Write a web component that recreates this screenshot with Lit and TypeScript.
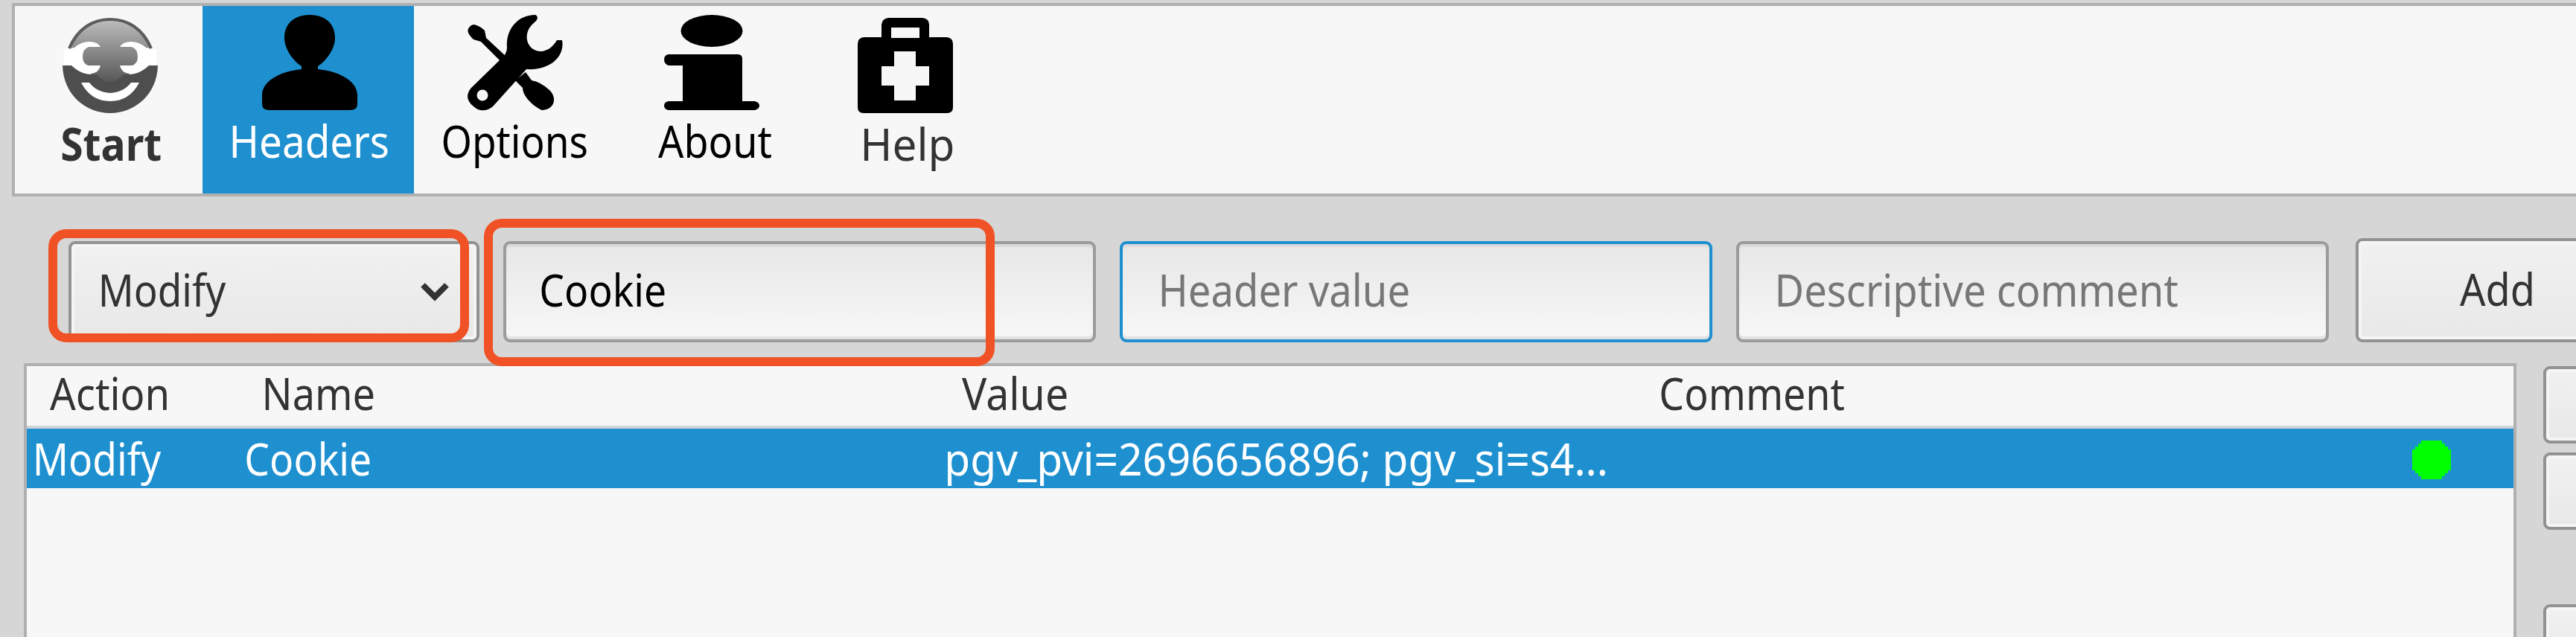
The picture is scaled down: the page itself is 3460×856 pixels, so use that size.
import { LitElement, html, css, svg } from "lit";
import { customElement, property } from "lit/decorators.js";

/* A single line of text squeezed to a fixed ink width. */
@customElement("fit-text")
class FitText extends LitElement {
  @property({ type: Number }) ink = 100;
  @property() text = "";
  @property({ type: Number }) weight = 400;
  static styles = css`
    :host { display: block; height: 84px; flex: none; }
    span { display: block; width: max-content; white-space: pre; line-height: 84px; transform-origin: 0 0; }
    .bold { font-weight: 700; }
  `;
  render() {
    return html`<span class=${this.weight > 500 ? "bold" : ""}>${this.text}</span>`;
  }
  updated() {
    const span = this.renderRoot.querySelector("span") as HTMLElement;
    const ctx = document.createElement("canvas").getContext("2d")!;
    ctx.font = `${this.weight} 61px "Noto Sans"`;
    const m = ctx.measureText(this.text);
    const k = this.ink / (m.actualBoundingBoxLeft + m.actualBoundingBoxRight);
    this.style.width = `${this.ink}px`;
    span.style.transform = `translateX(${m.actualBoundingBoxLeft * k}px) scaleX(${k})`;
  }
}

const startIcon = svg`
  <defs>
    <linearGradient id="face" x1="0" y1="0" x2="0" y2="1">
      <stop offset="0" stop-color="#bdbdbd"/><stop offset="1" stop-color="#505050"/>
    </linearGradient>
  </defs>
  <path d="M2 42L14 41Q24 30 36 30T54 40V65Q46 76 34 76T12 63L2 63ZM126 42L114 41Q104 30 92 30T74 40V65Q82 76 94 76T116 63L126 63Z" fill="#fff"/>
  <path d="M8 41C19 15 40 2 64 2S109 15 120 41L112 40Q103 32 92 32T77 39H93Q101 42 101 52T93 64H77Q79 74 90 75L84 92H44L38 75Q49 74 51 64H35Q27 62 27 52T35 39H51Q47 32 36 32T16 40Z" fill="url(#face)"/>
  <path d="M9 41C20 15 40 2 64 2S108 15 119 41" fill="none" stroke="#5c5c5c" stroke-width="4"/>
  <path d="M0 64H12C22 74 34 77 46 76Q54 86 64 86T82 76C94 77 106 74 116 64H128C127 103 97 128 64 128S1 103 0 64Z" fill="#4e4e4e"/>
  <path d="M25 87H36Q46 100 64 101Q82 100 92 87H103Q90 112 64 112T25 87Z" fill="#fff"/>`;
const personIcon = svg`<path d="M64 0C84 0 98 11 98 31C98 46 86 62 75 69V73C106 76 128 90 128 108V120Q128 128 118 128H10Q0 128 0 120V108C0 90 22 76 53 73V69C42 62 30 46 30 31C30 11 44 0 64 0Z"/>`;
const toolsIcon = svg`
  <path fill-rule="evenodd" d="M91 0C95 2 95 6 90 10C72 24 79 49 99 49C109 48 115 42 120 34H127C131 55 112 75 79 73L34 123C26 130 15 130 8 123C-2 115-2 106 5 98L44 60Q53 53 53 44C51 20 67 0 91 0ZM20 100.500A7.500 7.500 0 1 0 20 115.500A7.500 7.500 0 1 0 20 100.500Z"/>
  <path d="M9 13Q17 15 23 21L25 31L53 57L46 64L18 36L8 33Q-3 23 2 17Q5 13 9 13ZM78 77L86 88Q98 90 110 101C122 113 115 128 100 128C90 124 74 110 74 98L64 88Z"/>`;
const infoIcon = svg`<ellipse cx="64" cy="21.500" rx="41.500" ry="21.500"/><path d="M6 53H99Q105 53 105 59V116H122Q128 118 128 122T122 128H6Q0 127 0 122T6 116H25V68H6Q0 66 0 60T6 53Z"/>`;
const helpIcon = svg`<path fill-rule="evenodd" d="M41 0H87Q96 1 96 9V26H120Q128 27 128 35V120Q128 128 120 128H8Q0 128 0 120V35Q0 27 8 26H32V9Q33 1 41 0ZM45 13V27H83V13ZM49 45V65H32V91H49V111H78V91H96V65H78V45Z"/>`;

@customElement("app-root")
class AppRoot extends LitElement {
  static styles = css`
    :host { display: block; width: 3460px; height: 856px; overflow: hidden; }
    * { box-sizing: border-box; }
    .window { position: relative; width: 3460px; height: 856px; overflow: hidden; background: #d6d6d6; padding-top: 4px; font-family: "Noto Sans", sans-serif; font-size: 61px; color: #333; }
    .toolbar { margin-left: 16px; height: 260px; border: 4px solid #b0b0b0; border-right: 0; background: #f7f7f7; display: flex; }
    .tool { display: flex; flex-direction: column; align-items: center; padding-top: 12px; }
    .tool.low { padding-top: 16px; }
    .tool svg { width: 128px; height: 128px; margin-bottom: -1px; overflow: visible; display: block; flex: none; }
    .start { width: 252px; padding-left: 4px; }
    .start fit-text { margin-left: 3px; }
    .headers { width: 284px; padding-left: 4px; background: #1e90d0; color: #fff; }
    .options { width: 271px; color: #000; }
    .about { width: 266px; color: #000; }
    .about svg { margin-right: 8px; }
    .help { width: 246px; }
    .help fit-text { margin-left: 8px; }
    .help svg, .options svg, .about svg, .headers svg { fill: #000; }
    .form { height: 224px; padding: 60px 0 0 92px; display: flex; gap: 32px; }
    .field, .button { height: 136px; border: 4px solid #9b9b9b; border-radius: 9px; flex: none; display: flex; align-items: center; }
    .field, .select { padding-bottom: 7px; }
    .field { width: 796px; padding-left: 47px; background: linear-gradient(#e7e7e7, #f7f7f7); box-shadow: inset 0 4px #dadada, inset 0 -4px #e2e2e2; color: #000; }
    .field.hint { color: #777; }
    .focus { border-color: #1e90d0; padding-left: 52px; }
    .comment { padding-left: 52px; }
    .button { border-color: #929292; background: linear-gradient(#f1f1f1, #e8e8e8); box-shadow: inset 0 0 0 4px #f5f5f5; }
    .select { width: 552px; padding-left: 40px; padding-right: 36px; justify-content: space-between; }
    .select svg { width: 40px; height: 26px; margin-top: 8px; }
    .add { width: 360px; height: 140px; margin: -4px 0 0 4px; padding-left: 136px; padding-bottom: 4px; }
    .main { display: flex; gap: 36px; padding-left: 32px; height: 368px; }
    .table { width: 3348px; height: 380px; flex: none; border: 4px solid #b0b0b0; background: #f7f7f7; }
    .row { display: grid; grid-template-columns: 283px 942px 958px 1fr; align-items: center; height: 80px; }
    .row fit-text { margin: -6px 0; }
    .head { height: 84px; padding-left: 31px; padding-bottom: 8px; grid-template-columns: 289px 936px 939px 1fr; border-bottom: 4px solid #d0d4d7; }
    .selected { background: #1e90d0; color: #fff; padding-left: 12px; }
    .row .dot { width: 52px; height: 52px; margin: 4px 0 0 1009px; display: block; }
    .side { display: flex; flex-direction: column; padding-top: 4px; gap: 12px; }
    .side .button { width: 100px; height: 104px; }
    .side .button:last-child { margin-top: 88px; }
    .mark { position: absolute; border: 12px solid #f05225; border-radius: 24px; }
    .m1 { left: 65px; top: 308px; width: 565px; height: 152px; }
    .m2 { left: 650px; top: 294px; width: 686px; height: 198px; }
  `;
  tool(name: string, label: string, ink: number, icon: unknown, low = false, weight = 400) {
    return html`<div class="tool ${name} ${low ? "low" : ""}">
      <svg viewBox="0 0 128 128">${icon}</svg>
      <fit-text .text=${label} .ink=${ink} .weight=${weight}></fit-text>
    </div>`;
  }
  t(text: string, ink: number) {
    return html`<fit-text .text=${text} .ink=${ink}></fit-text>`;
  }
  render() {
    return html`<div class="window">
      <div class="toolbar">
        ${this.tool("start", "Start", 133, startIcon, true, 700)}
        ${this.tool("headers", "Headers", 209, personIcon)}
        ${this.tool("options", "Options", 193, toolsIcon)}
        ${this.tool("about", "About", 152, infoIcon)}
        ${this.tool("help", "Help", 120, helpIcon, true)}
      </div>
      <div class="form">
        <div class="button select">${this.t("Modify", 168)}
          <svg viewBox="0 0 40 26"><path d="M4 3L20 19L36 3" fill="none" stroke="#333" stroke-width="8"/></svg>
        </div>
        <div class="field">${this.t("Cookie", 166)}</div>
        <div class="field hint focus">${this.t("Header value", 332)}</div>
        <div class="field hint comment">${this.t("Descriptive comment", 537)}</div>
        <div class="button add">${this.t("Add", 97)}</div>
      </div>
      <div class="main">
        <div class="table">
          <div class="row head">${this.t("Action", 157)}${this.t("Name", 146)}${this.t("Value", 141)}${this.t("Comment", 246)}</div>
          <div class="row selected">${this.t("Modify", 169)}${this.t("Cookie", 166)}${this.t("pgv_pvi=2696656896; pgv_si=s4...", 883)}
            <svg class="dot" viewBox="0 0 13 13" shape-rendering="crispEdges"><path fill="#0f0" d="M3 0H10V1H11V2H12V3H13V10H12V11H11V12H10V13H3V12H2V11H1V10H0V3H1V2H2V1H3Z"/></svg>
          </div>
        </div>
        <div class="side"><div class="button"></div><div class="button"></div><div class="button"></div></div>
      </div>
      <div class="mark m1"></div>
      <div class="mark m2"></div>
    </div>`;
  }
}
